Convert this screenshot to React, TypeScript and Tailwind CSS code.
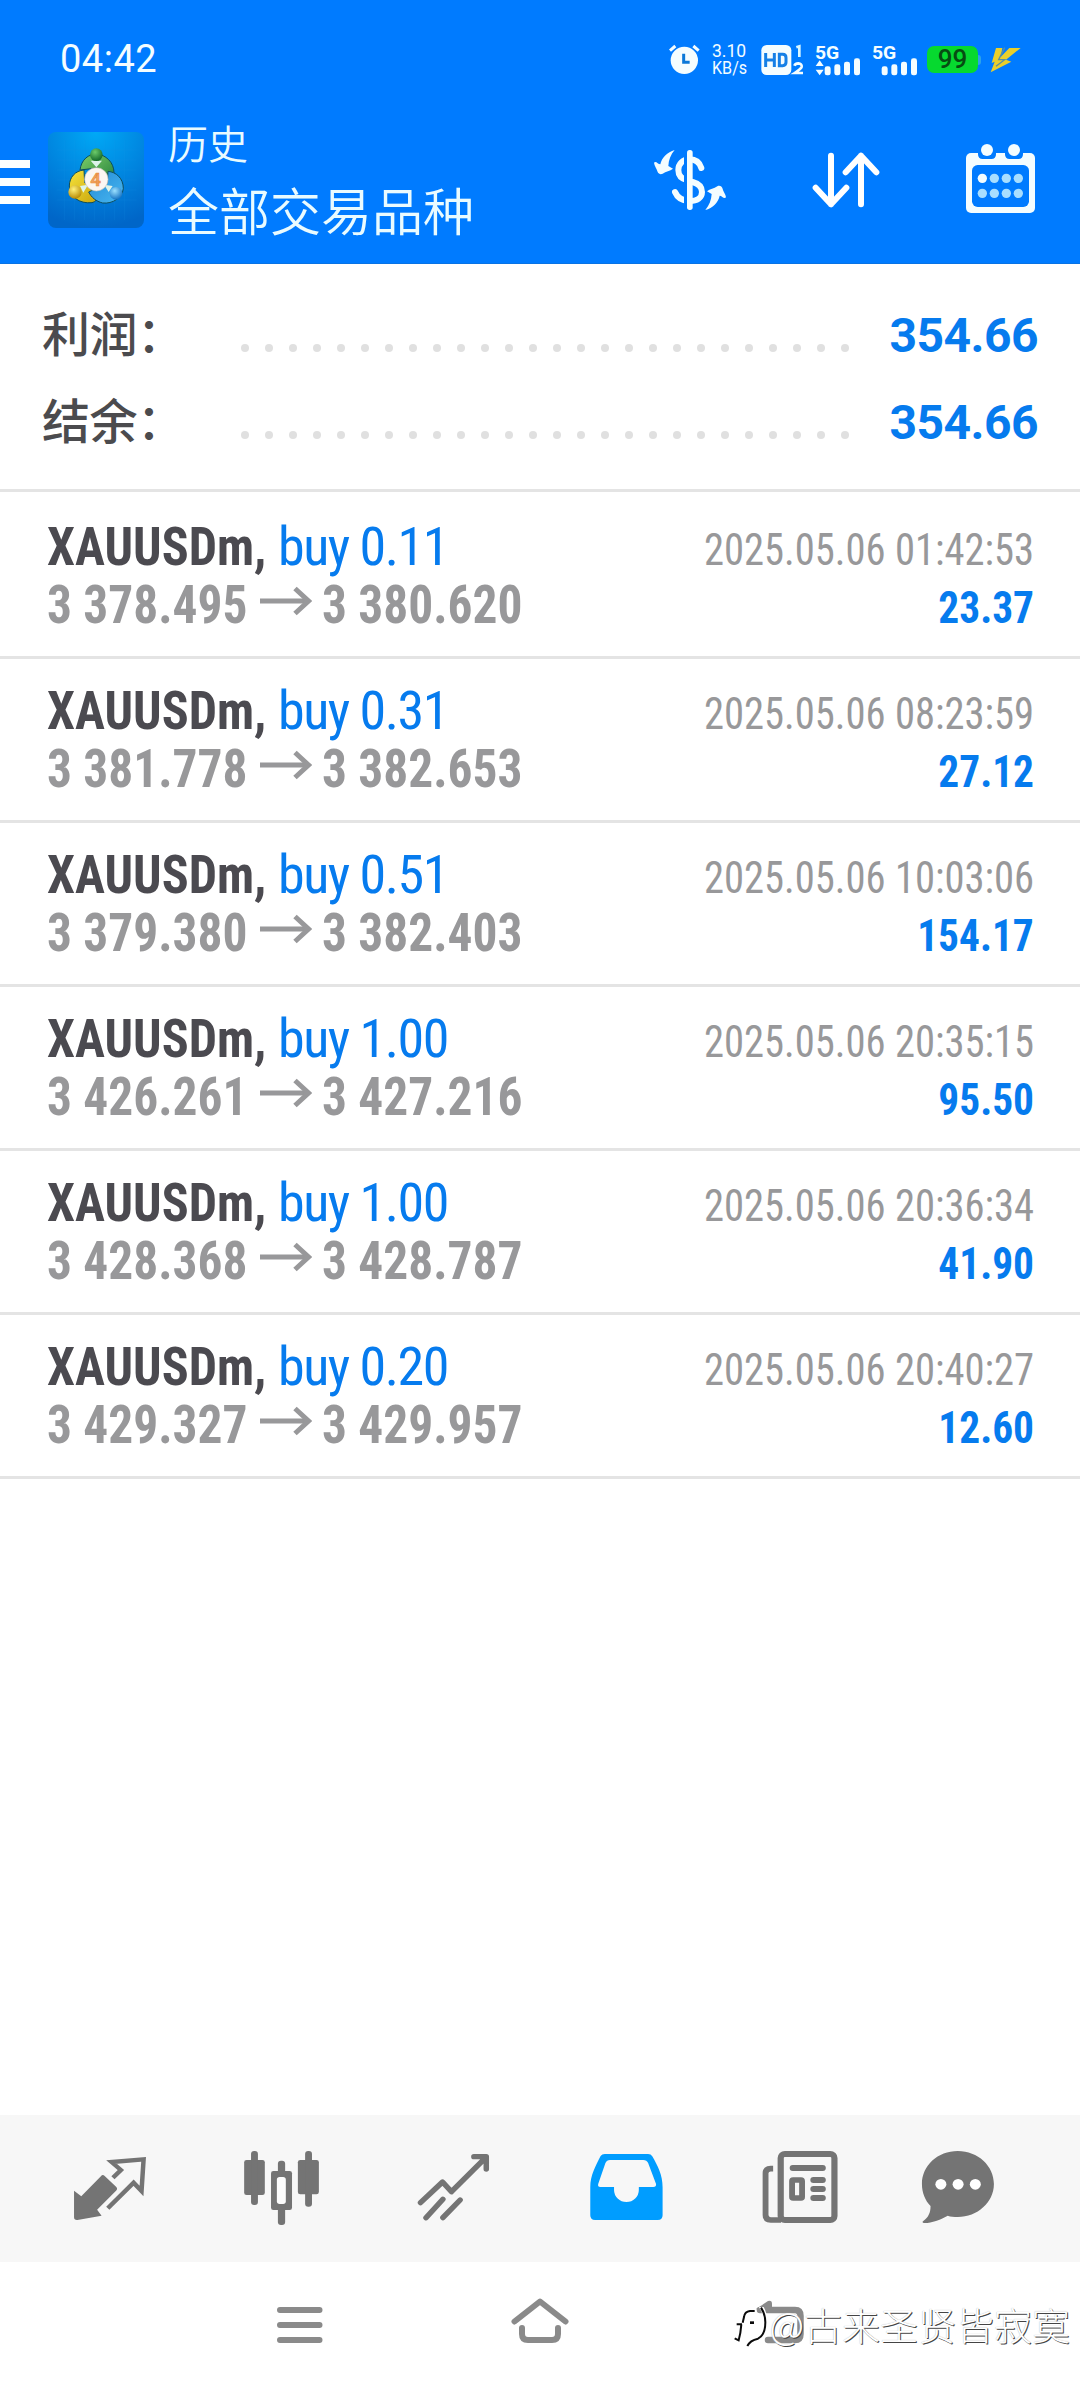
import type { ReactNode } from "react";

type Trade = {
  symbol: string;
  side: string;
  open: string;
  close: string;
  time: string;
  profit: string;
};

const trades: Trade[] = [
  { symbol: "XAUUSDm,", side: "buy 0.11", open: "3 378.495", close: "3 380.620", time: "2025.05.06 01:42:53", profit: "23.37" },
  { symbol: "XAUUSDm,", side: "buy 0.31", open: "3 381.778", close: "3 382.653", time: "2025.05.06 08:23:59", profit: "27.12" },
  { symbol: "XAUUSDm,", side: "buy 0.51", open: "3 379.380", close: "3 382.403", time: "2025.05.06 10:03:06", profit: "154.17" },
  { symbol: "XAUUSDm,", side: "buy 1.00", open: "3 426.261", close: "3 427.216", time: "2025.05.06 20:35:15", profit: "95.50" },
  { symbol: "XAUUSDm,", side: "buy 1.00", open: "3 428.368", close: "3 428.787", time: "2025.05.06 20:36:34", profit: "41.90" },
  { symbol: "XAUUSDm,", side: "buy 0.20", open: "3 429.327", close: "3 429.957", time: "2025.05.06 20:40:27", profit: "12.60" },
];

function AlarmIcon() {
  return (
    <svg viewBox="87 72 93 93" className="h-[31px] w-[31px]">
      <circle cx="133" cy="121" r="41" fill="#f4fdff" />
      <path d="M90 92 L106 78 M176 92 L160 78" stroke="#f4fdff" strokeWidth="9" />
      <path d="M131 101 V127 H149" fill="none" stroke="#0a78d8" strokeWidth="9" />
    </svg>
  );
}

function HdIcon() {
  return (
    <svg viewBox="365 66 132 102" className="h-[34px] w-[44px]">
      <rect x="366" y="72" width="90" height="90" rx="16" fill="#f4fdff" />
      <path d="M379 96 V138 M405 96 V138 M379 117 H405 M420 100 H430 Q440 100 440 110 V124 Q440 134 430 134 H420 Z" fill="none" stroke="#1580e6" strokeWidth="9" />
      <path d="M471 79 L480 76 V108" fill="none" stroke="#d8f6ff" strokeWidth="8" />
      <path d="M465 134 Q468 127 477 127 Q488 128 487 137 Q486 143 466 156 H491" fill="none" stroke="#f4fdff" strokeWidth="8" />
    </svg>
  );
}

function SignalIcon({ data }: { data: boolean }) {
  return (
    <svg viewBox="526 66 138 102" className="h-[34px] w-[46px] overflow-visible">
      <text x="526" y="115" fill="#f4fdff" fontFamily="Roboto" fontWeight="700" fontSize="57" textLength="73" lengthAdjust="spacingAndGlyphs">5G</text>
      {data && <path d="M540 118 L552 135 H528 Z M540 163 L552 146 H528 Z" fill="#f4fdff" />}
      <g fill="#f4fdff">
        <rect x="555" y="136" width="18" height="27" rx="7" />
        <rect x="584" y="130" width="18" height="33" rx="7" />
        <rect x="613" y="122" width="18" height="41" rx="7" />
        <rect x="643" y="112" width="18" height="51" rx="7" />
      </g>
    </svg>
  );
}

function BoltIcon() {
  return (
    <svg viewBox="1048 78 93 78" className="h-[26px] w-[31px]">
      <path d="M1066 81 H1085 L1080 108 L1106 81 H1140 L1096 116 L1112 122 L1050 154 L1062 122 L1053 126 Z" fill="#e9cf2b" />
      <path d="M1092 80 L1074 116 H1092 L1066 136" fill="none" stroke="#5a8fa0" strokeWidth="4" />
    </svg>
  );
}

function StatusBar() {
  return (
    <div className="flex h-[110px] items-start font-['Roboto'] text-[#f4fdff]">
      <span className="ml-[60px] mt-[37px] text-[38px] leading-[45px] tracking-[0.5px]">04:42</span>
      <div className="mr-[59px] mt-[42px] ml-auto flex h-[35px] items-center">
        <AlarmIcon />
        <div className="ml-[12px] flex w-[37px] flex-col text-[17.5px] leading-[17px]">
          <span>3.10</span>
          <span className="origin-left scale-x-[0.92]">KB/s</span>
        </div>
        <div className="ml-[12px]"><HdIcon /></div>
        <div className="ml-[10px]"><SignalIcon data /></div>
        <div className="ml-[11px]"><SignalIcon data={false} /></div>
        <div className="ml-[9px] flex items-center">
          <div className="flex h-[27px] w-[51px] items-center justify-center rounded-[7px] bg-[#06d92f] text-[26px] leading-[27px] font-medium text-[#064d12]">99</div>
          <div className="h-[10px] w-[3px] rounded-r-[3px] bg-[#2ba3e8]" />
        </div>
        <div className="ml-[9px]"><BoltIcon /></div>
      </div>
    </div>
  );
}

function AppLogo() {
  return (
    <svg viewBox="-36 -24 288 288" className="h-[96px] w-[96px] rounded-[8px]">
      <defs>
        <radialGradient id="tile" cx="0.5" cy="0" r="1">
          <stop offset="0" stopColor="#00a9f6" />
          <stop offset="0.6" stopColor="#0080dc" />
          <stop offset="1" stopColor="#0066c8" />
        </radialGradient>
        <linearGradient id="green" x1="0" y1="0" x2="1" y2="1">
          <stop offset="0" stopColor="#7fd06a" />
          <stop offset="1" stopColor="#23803a" />
        </linearGradient>
        <linearGradient id="yellow" x1="0" y1="0" x2="1" y2="1">
          <stop offset="0" stopColor="#f6e33c" />
          <stop offset="1" stopColor="#c9a50c" />
        </linearGradient>
        <linearGradient id="blue" x1="0" y1="0" x2="1" y2="1">
          <stop offset="0" stopColor="#2389d4" />
          <stop offset="1" stopColor="#48b8f2" />
        </linearGradient>
        <radialGradient id="greenBall" cx="0.4" cy="0.3" r="0.7">
          <stop offset="0" stopColor="#6ccb6a" />
          <stop offset="1" stopColor="#166b2c" />
        </radialGradient>
        <radialGradient id="yellowBall" cx="0.4" cy="0.3" r="0.7">
          <stop offset="0" stopColor="#fff27a" />
          <stop offset="1" stopColor="#b98c06" />
        </radialGradient>
        <radialGradient id="blueBall" cx="0.4" cy="0.3" r="0.7">
          <stop offset="0" stopColor="#9be0ff" />
          <stop offset="1" stopColor="#1674c4" />
        </radialGradient>
      </defs>
      <rect x="-36" y="-24" width="288" height="288" fill="url(#tile)" />
      <g stroke="#1d9be8" strokeOpacity="0.3" strokeWidth="1.5">
        <path d="M14 0 V240 M44 0 V240 M74 0 V240 M104 0 V240 M134 0 V240 M164 0 V240 M194 0 V240" />
        <path d="M-10 30 H230 M-10 60 H230 M-10 90 H230 M-10 120 H230 M-10 150 H230 M-10 180 H230" />
      </g>
      <g stroke="#0d4d5c" strokeWidth="3">
        <path d="M60 90 C64 58 86 42 110 42 C136 44 162 66 162 98 C162 112 154 122 146 128 L112 84 Z" fill="url(#green)" />
        <path d="M72 90 C46 92 28 112 28 138 C28 170 58 192 96 188 C106 186 112 178 114 170 L74 128 Z" fill="url(#yellow)" />
        <path d="M144 94 C168 96 190 114 190 146 C186 174 158 192 128 189 C108 184 94 172 86 156 L142 130 Z" fill="url(#blue)" />
      </g>
      <path d="M92 62 L109 82 L126 62 Z M60 138 L84 134 L70 158 Z M132 134 L158 138 L146 156 Z" fill="#ddf3ea" />
      <circle cx="109" cy="44" r="19" fill="url(#greenBall)" />
      <circle cx="45" cy="156" r="20" fill="url(#yellowBall)" />
      <circle cx="168" cy="160" r="19" fill="url(#blueBall)" />
      <circle cx="109" cy="118" r="35" fill="#fbf6f2" stroke="#c9c4bc" strokeWidth="2" />
      <text x="107" y="138" textAnchor="middle" fill="#f0a35e" stroke="#e8883c" strokeWidth="1.5" fontFamily="Roboto" fontWeight="700" fontSize="56">4</text>
    </svg>
  );
}

function ConvertIcon() {
  const arrow = "M164 120 C152 134 146 150 145 168 L159 176 C150 183 138 184 128 191 C122 194 116 192 113 186 C110 174 103 168 102 158 C108 152 114 163 121 163 C125 143 142 126 164 120Z";
  return (
    <svg viewBox="-21 0 465 462" className="h-[154px] w-[155px]">
      <path d="M244 174 C238 155 224 148 209 148 C188 148 175 162 175 180 C175 197 186 207 202 211 L218 216 C236 221 246 232 246 246 C246 264 230 273 210 273 C188 273 172 263 165 246" fill="none" stroke="#f4fdff" strokeWidth="18" strokeLinecap="round" />
      <rect x="192" y="110" width="10" height="200" fill="#007bff" />
      <rect x="201" y="120" width="17" height="180" rx="8" fill="#f4fdff" />
      <path d={arrow} fill="#f4fdff" />
      <path d={arrow} fill="#f4fdff" transform="rotate(180 210 210)" />
    </svg>
  );
}

function SortIcon() {
  return (
    <svg viewBox="444 0 465 462" className="h-[154px] w-[155px]">
      <path d="M633 137 V283 M587 233 L633 283 L679 233 M723 283 V137 M677 187 L723 137 L769 187" fill="none" stroke="#fff" strokeWidth="18" strokeLinecap="round" strokeLinejoin="round" />
    </svg>
  );
}

function CalendarIcon() {
  return (
    <svg viewBox="909 0 465 462" className="h-[154px] w-[155px]">
      <rect x="1038" y="129" width="207" height="180" rx="15" fill="#f4fdff" />
      <rect x="1056" y="165" width="171" height="126" rx="17" fill="#007bff" />
      <path d="M1074 120 H1128 V133 Q1128 147 1114 147 H1088 Q1074 147 1074 133 Z M1155 120 H1209 V133 Q1209 147 1195 147 H1169 Q1155 147 1155 133 Z" fill="#007bff" />
      <circle cx="1101" cy="120" r="18" fill="#f4fdff" />
      <circle cx="1182" cy="120" r="18" fill="#f4fdff" />
      <g fill="#a8deff">
        {[1087, 1123, 1159, 1195].map((x) => (
          <g key={x}>
            <circle cx={x} cy="205" r="14" fill={x === 1087 ? "#f4fdff" : "#a8deff"} />
            <circle cx={x} cy="250" r="14" />
          </g>
        ))}
      </g>
    </svg>
  );
}

function AppHeader() {
  return (
    <div className="flex h-[154px] items-start border-b border-[#0873e4]">
      <div className="mt-[50px] flex w-[30px] flex-col gap-[10px]">
        <div className="h-2 bg-[#fbffff]" />
        <div className="h-2 bg-[#fbffff]" />
        <div className="h-2 bg-[#fbffff]" />
      </div>
      <div className="mt-[22px] ml-[18px]"><AppLogo /></div>
      <div className="ml-[24px] flex flex-col pt-[2px] font-['Noto_Sans_CJK_SC',sans-serif] font-[350] text-[#e9fbff]">
        <span className="text-[40px] leading-[60px]">历史</span>
        <span className="text-[51px] leading-[74px]">全部交易品种</span>
      </div>
      <div className="mr-[2px] ml-auto flex">
        <ConvertIcon />
        <SortIcon />
        <CalendarIcon />
      </div>
    </div>
  );
}

function SummaryRow({ label, value }: { label: string; value: string }) {
  return (
    <div className="flex h-[87px] items-baseline pr-[42px] pl-[42px] leading-[87px]">
      <span className="w-[199px] font-['Noto_Sans_CJK_SC',sans-serif] text-[48px] font-medium tracking-[-0.5px] text-[#4b4b4e]">{label}</span>
      <div className="mb-px flex w-[608px] justify-between">
        {Array.from({ length: 26 }, (_, i) => (
          <div key={i} className="size-2 rounded-full bg-[#e0e0e0]" />
        ))}
      </div>
      <span className="ml-auto font-['Roboto'] text-[48px] font-bold tracking-[-0.5px] text-[#067bee]">{value}</span>
    </div>
  );
}

function TradeRow({ trade }: { trade: Trade }) {
  return (
    <div className="flex h-[164px] justify-between border-b-[3px] border-[#e4e4e4] pr-[46px] pl-[47px] font-['Roboto_Condensed'] leading-[58px]">
      <div className="flex flex-col pt-[23px] text-[54px] whitespace-nowrap">
        <div className="flex">
          <span className="w-[231px] origin-left scale-x-[0.927] font-bold text-[#4b4a50]">{trade.symbol}</span>
          <span className="tracking-[-1.5px] text-[#067bee]">{trade.side}</span>
        </div>
        <div className="flex font-bold text-[#98989a]">
          <span className="w-[213px] origin-left scale-x-[0.915]">{trade.open}</span>
          <svg viewBox="260 583 52 36" className="mt-[7px] mr-[10px] h-[36px] w-[52px]">
            <path d="M260 601 H308" stroke="#98989a" strokeWidth="5" />
            <path d="M295 588.5 L308.5 601 L295 613.5" fill="none" stroke="#98989a" strokeWidth="5" />
          </svg>
          <span className="origin-left scale-x-[0.915]">{trade.close}</span>
        </div>
      </div>
      <div className="flex flex-col items-end pt-[26px] text-[45px] whitespace-nowrap">
        <span className="origin-right scale-x-[0.902] text-[#98989a]">{trade.time}</span>
        <span className="origin-right scale-x-[0.92] font-bold text-[#067bee]">{trade.profit}</span>
      </div>
    </div>
  );
}

function TabCell({ box, children }: { box: string; children: ReactNode }) {
  return (
    <svg viewBox={box} preserveAspectRatio="none" className="h-[147px] w-[180px]">
      {children}
    </svg>
  );
}

function TabBar() {
  return (
    <div className="flex h-[147px] bg-[#f7f7f7]">
      <TabCell box="0 45 522.7 441">
        <path d="M215 272 L236 289 L293 229 Q298 222 304 228 L337 260 Q343 266 337 272 L282 329 L295 347 L225 360 Q215 361 215 352 Z" fill="#747474" />
        <path d="M328 233 L351 210 L324 186 L417 178 L411 273 L388 248 L313 325" fill="none" stroke="#747474" strokeWidth="13" />
      </TabCell>
      <TabCell box="522.7 45 522.7 441">
        <g fill="#747474">
          <rect x="709" y="180" width="60" height="105" rx="7" />
          <rect x="729" y="153" width="20" height="162" rx="9" />
          <rect x="865" y="180" width="61" height="103" rx="7" />
          <rect x="886" y="153" width="20" height="167" rx="9" />
          <rect x="787" y="213" width="61" height="117" rx="7" />
          <rect x="807" y="182" width="21" height="193" rx="9" />
        </g>
        <rect x="804" y="231" width="26" height="81" rx="8" fill="#fcfcfc" />
      </TabCell>
      <TabCell box="1045.3 45 522.7 441">
        <path d="M1221 308 L1285 246 L1311 275 L1411 172 M1376 170 H1412 V207 M1237 353 L1286 298 M1286 353 L1336 300" fill="none" stroke="#747474" strokeWidth="16" strokeLinecap="round" strokeLinejoin="round" />
      </TabCell>
      <TabCell box="0 45 522.7 441">
        <path fillRule="evenodd" d="M188 162 H314 q8 0 12 7 C342 198 356 225 356 262 V346 q0 14 -14 14 H160 q-14 0 -14 -14 V262 C146 225 162 197 176 168 q4 -6 12 -6z M203 180 q-9 0 -13 9 L169 252 q-2 9 6 9 H215 V270 a36 36 0 0 0 72 0 V261 H329 q9 0 8 -9 L314 189 q-4 -9 -14 -9z" fill="#009dff" />
      </TabCell>
      <TabCell box="522.7 45 522.7 441">
        <rect x="699" y="162" width="156" height="198" rx="12" fill="none" stroke="#747474" strokeWidth="18" />
        <path d="M677 206 H670 Q655 206 655 220 V345 Q655 360 670 360 H700" fill="none" stroke="#747474" strokeWidth="17" />
        <path d="M734 204 H821 M794 240 H821 M794 267 H821 M794 294 H821" stroke="#747474" strokeWidth="18" strokeLinecap="round" />
        <rect x="732" y="240" width="29" height="54" rx="3" fill="none" stroke="#747474" strokeWidth="17" />
      </TabCell>
      <TabCell box="1045.3 45 522.7 441">
        <path d="M1213 153 C1272 153 1318 198 1318 252 C1318 307 1270 351 1213 351 C1202 351 1192 350 1184 347 C1160 360 1136 370 1114 369 Q1108 367 1113 363 C1128 352 1134 338 1134 318 C1118 301 1109 278 1109 252 C1109 197 1155 153 1213 153 Z" fill="#747474" />
        <g fill="#fff">
          <circle cx="1164" cy="253" r="16" />
          <circle cx="1214" cy="253" r="16" />
          <circle cx="1264" cy="253" r="16" />
        </g>
      </TabCell>
    </div>
  );
}

function SystemNav() {
  return (
    <div className="relative flex h-[126px] justify-center bg-white">
      <svg viewBox="180 2262 240 126" className="h-[126px] w-[240px]">
        <path d="M280 2310 H319.5 M280 2325 H319.5 M280 2340 H319.5" stroke="#8a8a8a" strokeWidth="6" strokeLinecap="round" />
      </svg>
      <svg viewBox="420 2262 240 126" className="h-[126px] w-[240px]">
        <path d="M514.5 2321.5 L540 2301.5 L565.5 2321.5 M522 2328 V2334 Q522 2340 528 2340 H552 Q558 2340 558 2334 V2328" fill="none" stroke="#8a8a8a" strokeWidth="6" strokeLinecap="round" strokeLinejoin="round" />
      </svg>
      <svg viewBox="660 2262 240 126" className="h-[126px] w-[240px]">
        <path d="M756 2309 L768 2301 Q772 2300 772 2304 V2312 H762 Z" fill="#8a8a8a" />
        <path d="M760 2310 H795 Q800.5 2310 800.5 2316 V2334 Q800.5 2340 795 2340 H768" fill="none" stroke="#8a8a8a" strokeWidth="6.5" strokeLinecap="round" strokeLinejoin="round" />
      </svg>
      <div className="absolute right-[10px] bottom-[36px] flex items-center">
        <svg viewBox="36 66 102 126" className="mt-[7px] mr-px h-[42px] w-[34px]">
          <path d="M98 74 Q74 72 66 88 Q62 98 62 110 H46 M62 110 Q60 140 56 166 M113 60 Q130 78 130 112 Q130 148 106 160 Q84 166 78 186" fill="none" stroke="#fff" strokeWidth="12" />
          <path d="M98 78 H84 Q68 80 66 96 L62 113 M44 118 H60 M58 118 Q56 145 50 166 L38 160 M117 68 Q130 88 130 112 Q130 150 108 161 Q84 166 76 183" fill="none" stroke="#0b0b0b" strokeWidth="6" />
          <rect x="84" y="109" width="12" height="8" fill="#0b0b0b" />
        </svg>
        <span className="font-['Noto_Sans_CJK_SC',sans-serif] text-[38px] leading-[56px] font-light text-white [text-shadow:1px_1px_0_#444,0_0_1px_#aaa]">@古来圣贤皆寂寞</span>
      </div>
    </div>
  );
}

export default function App() {
  return (
    <div className="flex h-[2388px] w-[1080px] flex-col overflow-hidden bg-white">
      <header className="bg-[#007bff]">
        <StatusBar />
        <AppHeader />
      </header>
      <section className="mb-[3px] h-[228px] border-b-[3px] border-[#e4e4e4] pt-[24px]">
        <SummaryRow label="利润：" value="354.66" />
        <SummaryRow label="结余：" value="354.66" />
      </section>
      <main className="flex-1">
        {trades.map((t) => (
          <TradeRow key={t.time} trade={t} />
        ))}
      </main>
      <TabBar />
      <SystemNav />
    </div>
  );
}
